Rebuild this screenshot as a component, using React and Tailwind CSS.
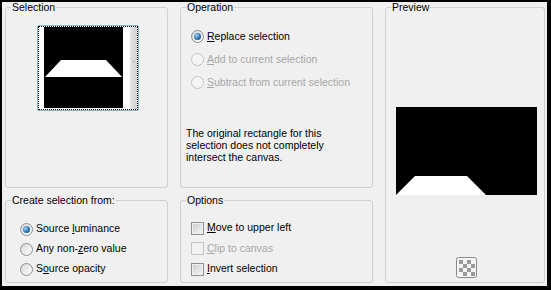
const font = { fontFamily: '"Liberation Sans", Arial, sans-serif' };

const U = ({ children }) => <span className="underline underline-offset-[1px]">{children}</span>;

const Group = ({ title, className = '', children }) => (
  <fieldset className={`border border-[#d0d0d0] rounded-[3px] min-w-0 ${className}`}>
    <legend className="ml-[5px] px-[1px] leading-[10px] text-black">{title}</legend>
    {children}
  </fieldset>
);

const Radio = ({ checked, disabled, children }) => (
  <div className="h-[23px] flex items-center gap-[3px]">
    <span
      className={`w-[13px] h-[13px] rounded-full border flex items-center justify-center shrink-0
        ${disabled
          ? 'border-[#c4c4c4] bg-[#f4f4f4]'
          : 'border-[#8c8f92] bg-[linear-gradient(135deg,#d6d6d6,#ffffff)]'}`}
    >
      {checked && (
        <span className="w-[7px] h-[7px] rounded-full bg-[radial-gradient(circle_at_35%_35%,#9ad6ff,#2a6aa3_60%,#164a78)]" />
      )}
    </span>
    <span className={disabled ? 'text-[#a7a7a7]' : 'text-black'}>{children}</span>
  </div>
);

const Check = ({ disabled, children }) => (
  <div className="h-[20.5px] flex items-center gap-[3px]">
    <span
      className={`w-[13px] h-[13px] border p-[1px] shrink-0
        ${disabled ? 'border-[#c6c6c6]' : 'border-[#8e8f8f]'}`}
    >
      <span
        className={`block w-full h-full ${disabled ? 'bg-[#f2f2f2]' : 'bg-[linear-gradient(135deg,#cfcfcf,#f4f4f4)]'}`}
      />
    </span>
    <span className={disabled ? 'text-[#a7a7a7]' : 'text-black'}>{children}</span>
  </div>
);

const Checker = () => (
  <svg width="21" height="21" viewBox="0 0 21 21">
    <rect x="0.5" y="0.5" width="20" height="20" rx="2" fill="#f4f4f4" stroke="#8a8a8a" />
    {[0, 1, 2, 3].map((r) =>
      [0, 1, 2, 3].map((c) =>
        (r + c) % 2 === 0 ? (
          <rect key={`${r}-${c}`} x={3 + c * 4} y={3 + r * 4} width="4" height="4" fill="#9a9a9a" />
        ) : null
      )
    )}
  </svg>
);

export default function App() {
  return (
    <div
      style={font}
      className="w-[551px] h-[290px] bg-[#f0f0f0] border-t-2 border-l-2 border-r-4 border-b-4 border-black text-[10.5px] pl-[3px] pr-[2px]"
    >
      <div className="grid grid-cols-[163px_193px_160px] grid-rows-[186px_88px] gap-x-[12px] gap-y-[7px]">
        {/* Selection */}
        <Group title="Selection">
          <div className="ml-[31px] mt-[13px] w-[102px] h-[86px] border border-[#86b6cb] rounded-[2px] bg-white">
            <div className="w-full h-full border border-dotted border-black flex">
              <div className="w-[5px]" />
              <div className="w-[79px] h-[81px] bg-black">
                <svg width="79" height="81" viewBox="0 0 79 81">
                  <polygon points="17,33 62,33 78,50 1,50" fill="#fff" />
                </svg>
              </div>
              <div className="w-[7px]" />
              <div className="flex-1 bg-[linear-gradient(90deg,#e4e4e4,#d2d2d2)] flex items-center justify-center">
                <span className="w-[3px] h-[1px] bg-[#b8b8b8] -mt-[14px]" />
              </div>
            </div>
          </div>
        </Group>

        {/* Operation */}
        <Group title="Operation">
          <div className="pl-[10px] mt-[13px]">
            <Radio checked><U>R</U>eplace selection</Radio>
            <Radio disabled><U>A</U>dd to current selection</Radio>
            <Radio disabled><U>S</U>ubtract from current selection</Radio>
          </div>
          <p className="pl-[5px] mt-[33px] leading-[12px] text-black">
            The original rectangle for this
            <br />
            selection does not completely
            <br />
            intersect the canvas.
          </p>
        </Group>

        {/* Preview */}
        <Group title="Preview" className="row-span-2">
          <div className="ml-[10px] mt-[95px] w-[141px] h-[88px] bg-black">
            <svg width="141" height="88" viewBox="0 0 141 88">
              <polygon points="19,69 71,69 90,88 0,88" fill="#fff" />
            </svg>
          </div>
          <div className="ml-[70px] mt-[62px] w-[21px] h-[21px]">
            <Checker />
          </div>
        </Group>

        {/* Create selection from */}
        <Group title="Create selection from:">
          <div className="pl-[14px] mt-[14px] [&>div]:h-[20px]">
            <Radio checked>Source <U>l</U>uminance</Radio>
            <Radio>Any non-<U>z</U>ero value</Radio>
            <Radio>S<U>o</U>urce opacity</Radio>
          </div>
        </Group>

        {/* Options */}
        <Group title="Options">
          <div className="pl-[10px] mt-[13px]">
            <Check><U>M</U>ove to upper left</Check>
            <Check disabled><U>C</U>lip to canvas</Check>
            <Check><U>I</U>nvert selection</Check>
          </div>
        </Group>
      </div>
    </div>
  );
}
